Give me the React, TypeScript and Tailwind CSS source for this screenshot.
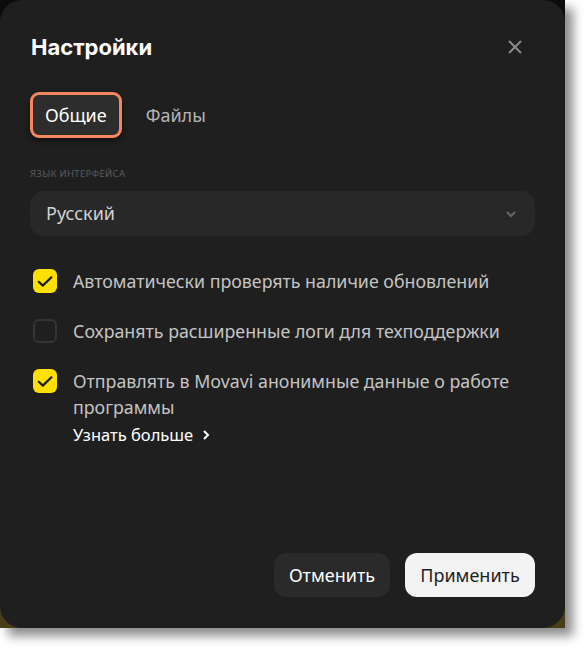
import React from "react";

const Check = () => (
  <svg width="24" height="24" viewBox="0 0 24 24" fill="none">
    <path d="M5.8 12.8L9.8 16.6L18.4 8.3" stroke="#1b1b1b" strokeWidth="2.2" strokeLinecap="round" strokeLinejoin="round" />
  </svg>
);

function Row({ checked, children }: { checked: boolean; children: React.ReactNode }) {
  return (
    <div className="flex items-start gap-4">
      <div
        className={
          checked
            ? "mt-[1px] w-[24px] h-[24px] shrink-0 rounded-[6px] bg-[#ffe100] flex items-center justify-center"
            : "mt-[1px] w-[24px] h-[24px] shrink-0 rounded-[6px] border-2 border-[#343434]"
        }
      >
        {checked && <Check />}
      </div>
      <div className="text-[17.8px] leading-[26px] text-[#c4c4c4]">{children}</div>
    </div>
  );
}

export default function App() {
  return (
    <div className="w-[585px] h-[648px] bg-white" style={{ fontFamily: '"Noto Sans", "Open Sans", sans-serif' }}>
      <div
        className="w-[565px] h-[628px] bg-[linear-gradient(180deg,#0c0c0c_0%,#0c0c0c_50%,#4a3e18_100%)] shadow-[8px_8px_10px_rgba(0,0,0,0.45)]"
      >
        <div className="w-full h-full rounded-[22px] bg-[#1f1f1f] flex flex-col px-[30px]">
          <div className="flex items-center justify-between pt-[32px]">
            <div className="text-[22px] leading-[30px] font-bold text-white pl-[1px]" style={{ fontFamily: "Inter, sans-serif" }}>
              Настройки
            </div>
            <svg width="16" height="16" viewBox="0 0 16 16" className="mr-[12px]">
              <path d="M2 2l12 12M14 2L2 14" stroke="#8a8a8a" strokeWidth="2" />
            </svg>
          </div>
          <div className="flex items-center gap-[24px] mt-[30px]">
            <div className="h-[46px] px-[12px] rounded-[9px] border-[3px] border-[#f2875f] bg-[#2d2d2d] flex items-center text-[18px] text-white shadow-[0_3px_6px_rgba(0,0,0,0.5)]">
              Общие
            </div>
            <div className="text-[18px] text-[#b4b4b4]">Файлы</div>
          </div>
          <div className="mt-[29px] text-[9.5px] tracking-[0.3px] text-[#5c5c5c]">ЯЗЫК ИНТЕРФЕЙСА</div>
          <div className="mt-[10px] h-[45px] rounded-[14px] bg-[#282828] flex items-center justify-between pl-[16px] pr-[18px]">
            <span className="text-[18px] text-[#d2d2d2]">Русский</span>
            <svg width="12" height="8" viewBox="0 0 12 8">
              <path d="M2 2l4 4 4-4" stroke="#666" strokeWidth="2" fill="none" />
            </svg>
          </div>
          <div className="mt-[32px] flex flex-col gap-[24px] pl-[3px]">
            <Row checked>Автоматически проверять наличие обновлений</Row>
            <Row checked={false}>Сохранять расширенные логи для техподдержки</Row>
            <Row checked>
              <div>Отправлять в Movavi анонимные данные о работе программы</div>
              <div className="mt-[2px] flex items-center gap-[9px] text-white text-[16.5px]">
                Узнать больше
                <svg width="8" height="12" viewBox="0 0 8 12">
                  <path d="M2 2l4 4-4 4" stroke="#fff" strokeWidth="2" fill="none" />
                </svg>
              </div>
            </Row>
          </div>
          <div className="mt-auto mb-[31px] flex justify-end gap-[15px]">
            <div className="h-[44px] w-[116px] rounded-[12px] bg-[#2a2a2a] text-[18px] text-white flex items-center justify-center">
              Отменить
            </div>
            <div className="h-[44px] w-[130px] rounded-[12px] bg-[#f3f3f3] text-[18px] text-[#1e1e1e] flex items-center justify-center">
              Применить
            </div>
          </div>
        </div>
      </div>
    </div>
  );
}
